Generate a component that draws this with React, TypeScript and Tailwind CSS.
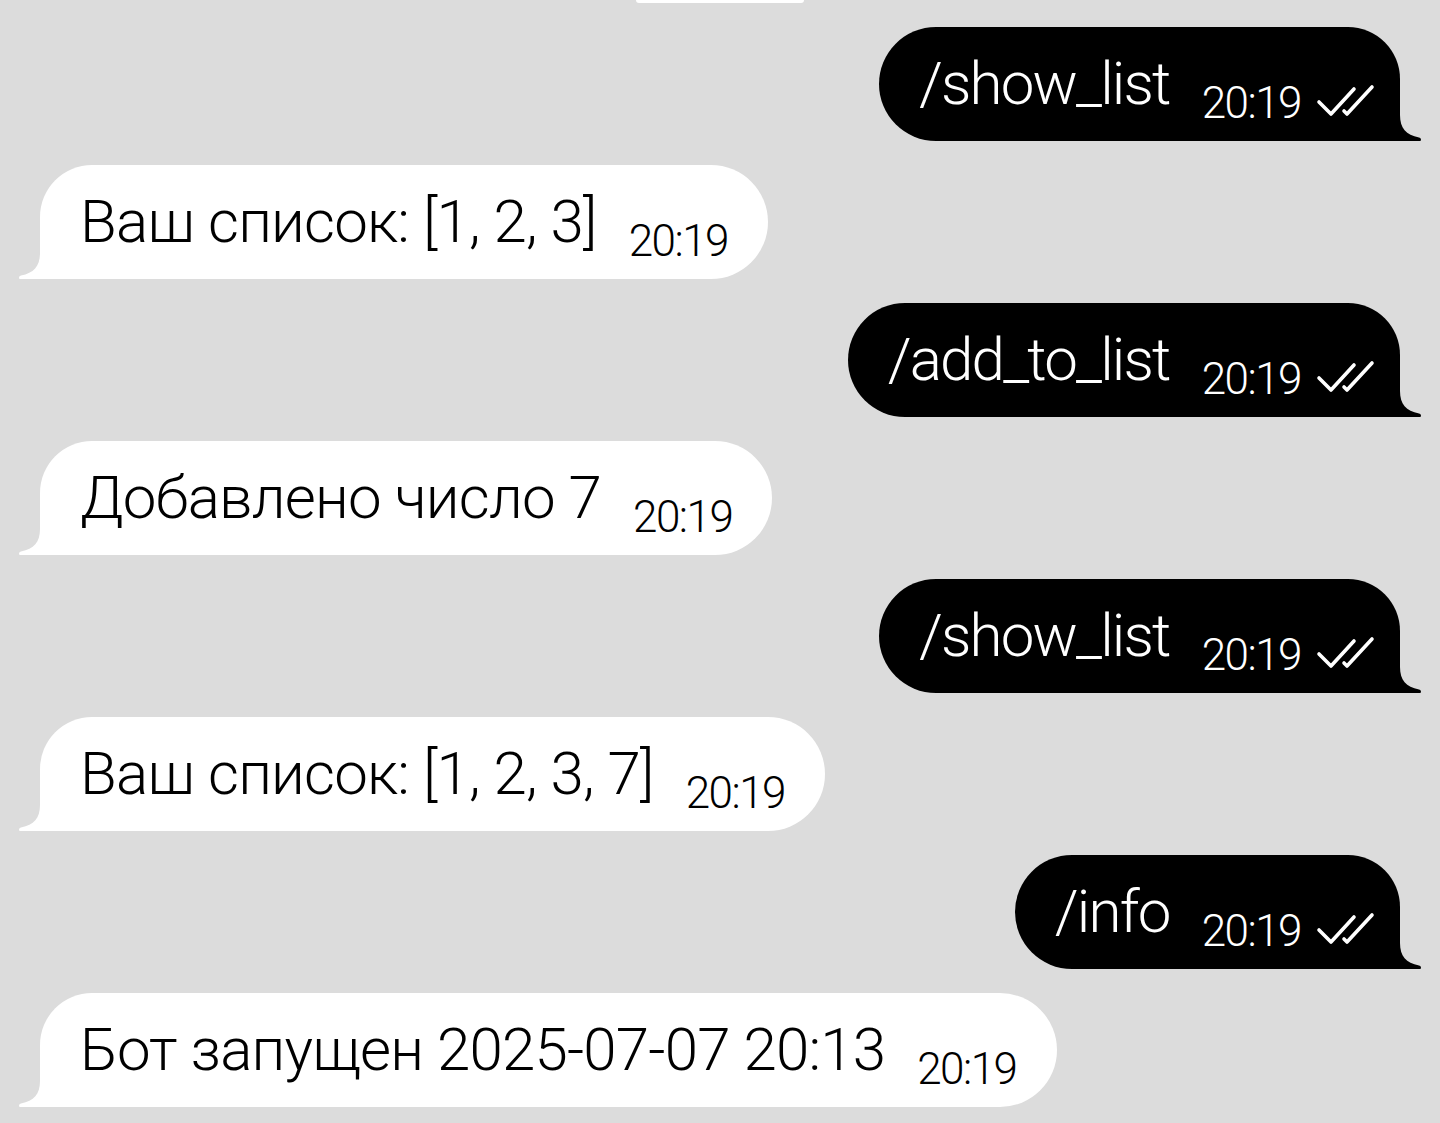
const messages: { out: boolean; text: string }[] = [
  { out: true, text: '/show_list' },
  { out: false, text: 'Ваш список: [1, 2, 3]' },
  { out: true, text: '/add_to_list' },
  { out: false, text: 'Добавлено число 7' },
  { out: true, text: '/show_list' },
  { out: false, text: 'Ваш список: [1, 2, 3, 7]' },
  { out: true, text: '/info' },
  { out: false, text: 'Бот запущен 2025-07-07 20:13' },
];

function DoubleCheck() {
  return (
    <svg width="60" height="34" viewBox="0 0 60 34" className="mb-[24px] ml-[14px] shrink-0">
      <g fill="none" stroke="#fff" strokeWidth="3.6" strokeLinecap="round" strokeLinejoin="round">
        <path d="M4 19 L16 31 L39 6" />
        <path d="M29 28 L32 31 L57 4" />
      </g>
    </svg>
  );
}

function Bubble({ out, text }: { out: boolean; text: string }) {
  return (
    <div className={`flex ${out ? 'justify-end' : 'justify-start'}`}>
      <div
        className={`relative flex h-[114px] items-end ${
          out
            ? 'rounded-l-[57px] rounded-tr-[52px] bg-black pl-[40px] pr-[25px] text-white'
            : 'rounded-r-[57px] rounded-tl-[52px] bg-white pl-[40px] pr-[40px] text-black'
        }`}
      >
        <span
          className={`mb-[27px] whitespace-nowrap text-[60px] font-light leading-none ${
            out ? 'tracking-[-1.8px]' : 'tracking-[-0.8px]'
          }`}
        >
          {text}
        </span>
        <span className="mb-[16px] ml-[32px] whitespace-nowrap text-[44px] font-light leading-none tracking-[-1.5px]">
          20:19
        </span>
        {out && <DoubleCheck />}
        {out ? (
          <svg width="22" height="26" viewBox="0 0 22 26" className="absolute bottom-0 left-full">
            <path d="M0 0 C0 13 6 20 19 22.5 Q22 23.5 20.5 26 L0 26 Z" fill="#000" />
          </svg>
        ) : (
          <svg width="22" height="26" viewBox="0 0 22 26" className="absolute bottom-0 right-full">
            <path d="M22 0 C22 13 16 20 3 22.5 Q0 23.5 1.5 26 L22 26 Z" fill="#fff" />
          </svg>
        )}
      </div>
    </div>
  );
}

export default function App() {
  return (
    <div
      className="min-h-[1123px] w-full overflow-hidden bg-[#dcdcdc] px-[40px]"
      style={{ fontFamily: 'Roboto, "Noto Sans", sans-serif' }}
    >
      <div className="mx-auto h-[3px] w-[168px] rounded-b-full bg-white" />
      <div className="flex flex-col gap-[24px] pt-[24px]">
        {messages.map((m, i) => (
          <Bubble key={i} out={m.out} text={m.text} />
        ))}
      </div>
    </div>
  );
}
